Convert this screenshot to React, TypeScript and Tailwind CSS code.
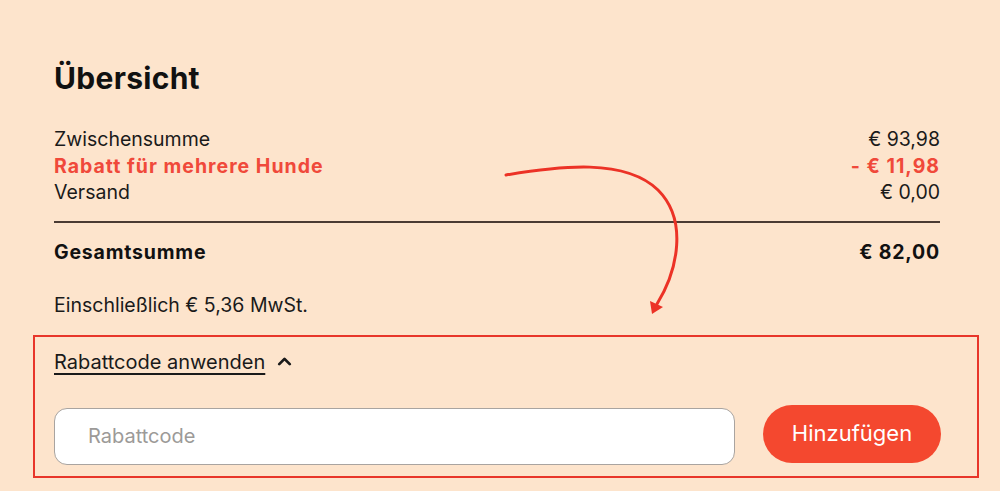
import { ChevronUp } from "lucide-react";

const font = { fontFamily: "Inter, 'Noto Sans', sans-serif" };

function Row({ label, value, red }: { label: string; value: string; red?: boolean }) {
  return (
    <div
      className={
        "flex justify-between text-[19.5px] leading-[26.5px] " +
        (red ? "font-bold tracking-[1px] text-[#f0493a]" : "text-[#1a1a1a]")
      }
    >
      <span>{label}</span>
      <span>{value}</span>
    </div>
  );
}

export default function App() {
  return (
    <div className="relative w-[1000px] h-[491px] overflow-hidden bg-[#fde4cc]" style={font}>
      {/* Summary */}
      <div className="pl-[54px] pr-[60px] pt-[58px]">
        <h1 className="text-[30px] leading-[40px] font-bold tracking-[0.3px] text-[#111]">Übersicht</h1>

        <div className="mt-[28px]">
          <Row label="Zwischensumme" value="€ 93,98" />
          <Row label="Rabatt für mehrere Hunde" value="- € 11,98" red />
          <Row label="Versand" value="€ 0,00" />
        </div>

        <div className="mt-[15px] h-[2px] bg-[#4a3b33]" />

        <div className="mt-[16px] flex justify-between text-[19.5px] leading-[26px] font-bold tracking-[0.8px] text-[#111]">
          <span>Gesamtsumme</span>
          <span>€ 82,00</span>
        </div>

        <p className="mt-[27px] text-[19.5px] leading-[26px] text-[#1a1a1a]">Einschließlich € 5,36 MwSt.</p>
      </div>

      {/* Discount code section (highlighted) */}
      <div className="ml-[33px] w-[946px] mt-[17px] border-2 border-[#e8362a] pl-[19px] pr-[36px] pt-[12px] pb-[11px]">
        <button className="flex items-center gap-[9px] text-[20px] leading-[26px] text-[#1a1a1a]">
          <span className="underline underline-offset-[4px] decoration-[1.5px]">Rabattcode anwenden</span>
          <ChevronUp className="w-[21px] h-[21px]" strokeWidth={3.2} />
        </button>

        <div className="mt-[30px] flex items-start gap-[28px]">
          <input
            placeholder="Rabattcode"
            className="flex-1 mt-[3px] h-[57px] rounded-[13px] border border-[#a9a4a0] bg-white px-[33px] text-[20px] text-[#1a1a1a] placeholder:text-[#9c9a98] outline-none"
          />
          <button className="w-[178px] h-[58px] rounded-full bg-[#f4482f] text-white text-[22px]">
            Hinzufügen
          </button>
        </div>
      </div>

      {/* Annotation arrow */}
      <svg className="absolute left-0 top-0 pointer-events-none" width="1000" height="491">
        <path
          d="M506 175 C 560 166, 625 158, 658 190 C 688 220, 678 270, 657 304"
          fill="none"
          stroke="#ec3226"
          strokeWidth="3"
          strokeLinecap="round"
        />
        <path d="M652 314 L 650 301 L 663 307 Z" fill="#ec3226" />
      </svg>
    </div>
  );
}
